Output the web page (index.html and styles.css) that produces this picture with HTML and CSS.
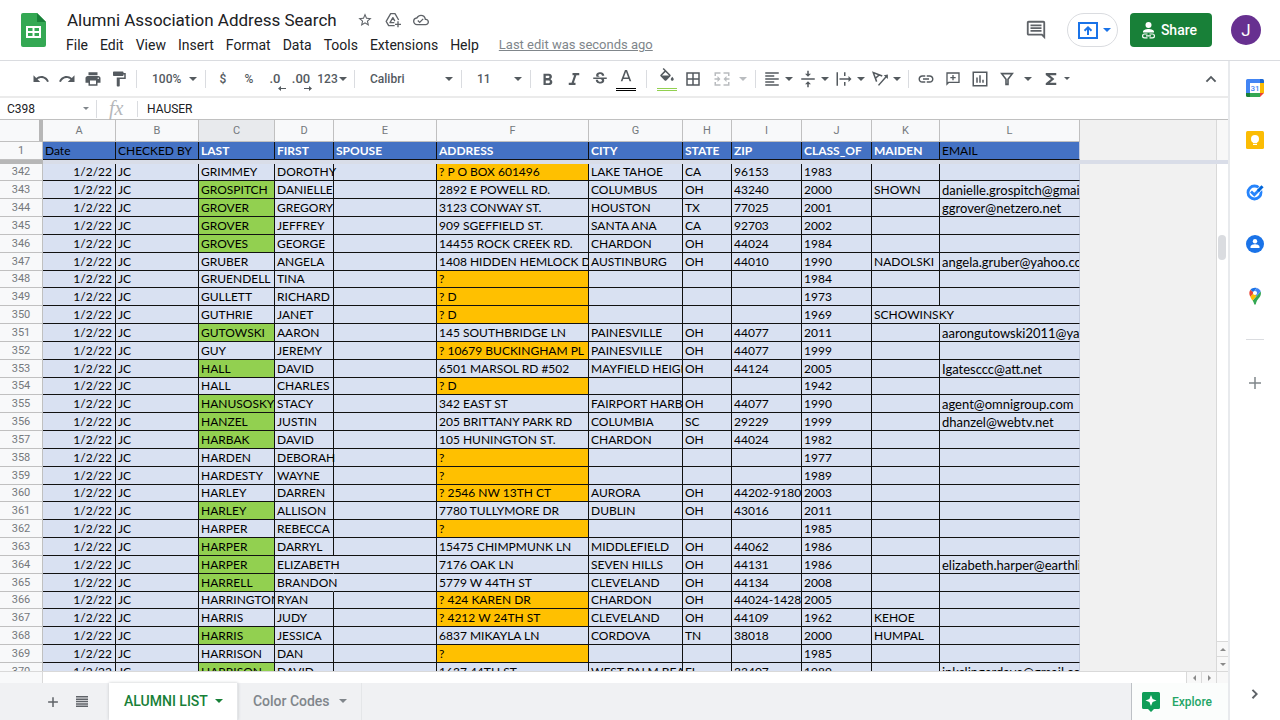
FILE: index.html
```html
<!DOCTYPE html>
<html lang="en">
<head>
<meta charset="utf-8">
<title>Alumni Association Address Search</title>
<link rel="stylesheet" href="styles.css">
</head>
<body>
<header class="top">
  <svg class="logo" viewBox="0 0 25 34" aria-hidden="true"><path fill="#34a853" d="M2 0h14l9 9v23a2 2 0 0 1-2 2H2a2 2 0 0 1-2-2V2a2 2 0 0 1 2-2z"/><path fill="#188038" d="M16 0l9 9h-9z"/><path fill="#fff" fill-rule="evenodd" d="M5 13h15v12H5zM7 15v3h4.500v-3zM13.500 15v3H18v-3zM7 20v3h4.500v-3zM13.500 20v3H18v-3z"/></svg>
  <div class="doc">
    <div class="doc-line">
      <h1>Alumni Association Address Search</h1>
      <button class="mini" aria-label="Star"><svg class="i16" viewBox="0 0 24 24"><path d="M22 9.240l-7.190-.62L12 2 9.190 8.630 2 9.240l5.460 4.730L5.820 21 12 17.270 18.180 21l-1.630-7.030zM12 15.400l-3.760 2.270 1-4.280-3.320-2.880 4.380-.38L12 6.100l1.710 4.040 4.380.38-3.320 2.880 1 4.280z"/></svg></button>
      <button class="mini" aria-label="Add shortcut to Drive"><svg class="i16" viewBox="0 0 24 24" fill="none" stroke="currentColor" stroke-width="2" stroke-linejoin="round"><path d="M14.500 20.500H5.500L1.800 14 8.500 2.500h6.500l5.500 9.500"/><path d="M14 16H7.500l4.300-7.500 3 5.200"/><path d="M19.500 14v9M15 18.500h9"/></svg></button>
      <button class="mini" aria-label="Document status: saved to Drive"><svg class="i16" viewBox="0 0 24 24"><path d="M19.350 10.040A7.490 7.490 0 0 0 12 4C9.110 4 6.600 5.640 5.350 8.040A5.994 5.994 0 0 0 0 14c0 3.310 2.690 6 6 6h13c2.760 0 5-2.240 5-5 0-2.640-2.050-4.780-4.650-4.960zM19 18H6c-2.210 0-4-1.790-4-4 0-2.050 1.530-3.760 3.560-3.970l1.070-.11.5-.95A5.469 5.469 0 0 1 12 6c2.620 0 4.880 1.860 5.390 4.430l.3 1.500 1.530.11A2.980 2.980 0 0 1 22 15c0 1.650-1.350 3-3 3zm-9-3.820l-2.090-2.090L6.500 13.500 10 17l6.010-6.010-1.410-1.410z"/></svg></button>
    </div>
    <nav class="menus">
      <button>File</button><button>Edit</button><button>View</button><button>Insert</button><button>Format</button><button>Data</button><button>Tools</button><button>Extensions</button><button>Help</button>
      <a href="#history">Last edit was seconds ago</a>
    </nav>
  </div>
  <div class="actions">
    <button class="mini comments" aria-label="Open comment history"><svg class="i22" viewBox="0 0 24 24"><path d="M21.990 4c0-1.100-.89-2-1.990-2H4c-1.100 0-2 .9-2 2v12c0 1.100.9 2 2 2h14l4 4zM20 4v13.170L18.830 16H4V4zM6 12h12v2H6zm0-3h12v2H6zm0-3h12v2H6z"/></svg></button>
    <button class="present" aria-label="Present"><svg width="20" height="17" viewBox="0 0 20 17" fill="none" stroke="currentColor" stroke-width="2"><path d="M1 1h18v15H1z"/><path d="M10 13V6M6.500 8.800L10 5.300l3.500 3.500"/></svg><span class="caret"></span></button>
    <button class="share"><svg width="13" height="17" viewBox="0 0 13 17" aria-hidden="true"><circle cx="6.500" cy="3" r="3" fill="#fff"/><path fill="#fff" d="M1 10.500V9.800C1 7.800 4.500 7 6.500 7s5.500.8 5.500 2.800v.7z"/><g fill="none" stroke="#fff" stroke-width="1.200"><path d="M5.500 12h-3a1.900 1.900 0 0 0 0 3.800h3M7.500 12h3a1.900 1.900 0 0 1 0 3.800h-3M4 13.900h5"/></g></svg>Share</button>
    <button class="avatar" aria-label="Account">J</button>
  </div>
</header>

<div class="frame">
<main class="work">
  <div class="toolbar" role="toolbar" aria-label="Formatting">
    <div class="group">
      <button class="tb" aria-label="Undo"><svg class="i18" viewBox="0 0 24 24"><path d="M12.500 8c-2.650 0-5.050.99-6.900 2.600L2 7v9h9l-3.620-3.620c1.390-1.160 3.160-1.880 5.120-1.880 3.540 0 6.550 2.310 7.600 5.500l2.370-.78C21.080 11.030 17.150 8 12.500 8z"/></svg></button>
      <button class="tb" aria-label="Redo"><svg class="i18" viewBox="0 0 24 24"><path d="M18.400 10.600C16.550 8.990 14.150 8 11.500 8c-4.650 0-8.580 3.030-9.960 7.220L3.900 16c1.050-3.190 4.050-5.500 7.600-5.500 1.950 0 3.730.72 5.120 1.880L13 16h9V7z"/></svg></button>
      <button class="tb" aria-label="Print"><svg class="i18" viewBox="0 0 24 24"><path d="M19 8H5c-1.660 0-3 1.340-3 3v6h4v4h12v-4h4v-6c0-1.660-1.340-3-3-3zm-3 11H8v-5h8zm3-7c-.55 0-1-.45-1-1s.45-1 1-1 1 .45 1 1-.45 1-1 1zM18 3H6v4h12z"/></svg></button>
      <button class="tb" aria-label="Paint format"><svg class="i18" viewBox="0 0 24 24"><path d="M18 4V3c0-.55-.45-1-1-1H5c-.55 0-1 .45-1 1v4c0 .55.45 1 1 1h12c.55 0 1-.45 1-1V6h1v4H9v11c0 .55.45 1 1 1h2c.55 0 1-.45 1-1v-9h8V4z"/></svg></button>
    </div>
    <span class="sep"></span>
    <label class="pick small"><select aria-label="Zoom"><option>100%</option></select><span class="caret"></span></label>
    <span class="sep"></span>
    <div class="group">
      <button class="tb" aria-label="Format as currency">$</button>
      <button class="tb" aria-label="Format as percent">%</button>
      <button class="tb dec" aria-label="Decrease decimal places">.0<svg width="8" height="5" viewBox="0 0 8 5"><path d="M3 0v2h5v1H3v2L0 2.500z"/></svg></button>
      <button class="tb dec" aria-label="Increase decimal places">.00<svg width="8" height="5" viewBox="0 0 8 5"><path d="M5 0v2H0v1h5v2l3-2.500z"/></svg></button>
      <button class="tb more" aria-label="More formats">123<span class="caret"></span></button>
    </div>
    <span class="sep"></span>
    <label class="pick large"><select aria-label="Font"><option>Calibri</option></select><span class="caret"></span></label>
    <span class="sep"></span>
    <label class="pick small"><select aria-label="Font size"><option>11</option></select><span class="caret"></span></label>
    <span class="sep"></span>
    <div class="group">
      <button class="tb" aria-label="Bold"><svg class="i18" viewBox="0 0 24 24"><path d="M15.600 11.790c.97-.67 1.650-1.770 1.650-2.790 0-2.260-1.750-4-4-4H6v15h8.040c2.090 0 3.710-1.700 3.710-3.790 0-1.520-.86-2.820-2.150-3.420zM9 7.500h3.500c.83 0 1.500.67 1.500 1.500s-.67 1.500-1.500 1.500H9zm4 10H9V14h4c.83 0 1.500.67 1.500 1.750S13.830 17.500 13 17.500z"/></svg></button>
      <button class="tb" aria-label="Italic"><svg class="i18" viewBox="0 0 24 24"><path d="M10 4v3h2.210l-3.420 10H5v3h9v-3h-2.210l3.420-10H19V4z"/></svg></button>
      <button class="tb" aria-label="Strikethrough"><svg class="i18" viewBox="0 0 24 24"><path d="M7.240 8.750c-.26-.48-.39-1.030-.39-1.670 0-.61.13-1.160.4-1.670.26-.5.63-.93 1.110-1.290a5.730 5.730 0 0 1 1.700-.83c.66-.19 1.390-.29 2.180-.29.81 0 1.540.11 2.210.34.66.22 1.230.54 1.690.94.47.4.83.88 1.080 1.430s.38 1.150.38 1.810h-3.010c0-.31-.05-.59-.15-.85-.09-.27-.24-.49-.44-.68-.2-.19-.45-.33-.75-.44-.3-.1-.66-.16-1.060-.16-.39 0-.74.04-1.030.13s-.53.21-.72.36c-.19.16-.34.34-.44.55-.1.21-.15.430-.15.66 0 .48.25.88.74 1.210.38.250.77.480 1.410.7H7.390c-.05-.08-.11-.17-.15-.25zM21 12v-2H3v2h9.620c.18.070.4.140.55.2.37.170.66.340.87.510s.35.360.43.570c.07.200.11.430.11.690 0 .23-.05.450-.14.660-.09.200-.23.380-.42.530-.19.150-.42.260-.71.350-.29.080-.63.130-1.010.130-.43 0-.83-.04-1.180-.13s-.66-.23-.91-.42a1.920 1.920 0 0 1-.59-.75c-.14-.31-.25-.76-.25-1.210H6.400c0 .55.080 1.130.24 1.580s.37.850.65 1.210c.28.350.6.660.98.920.37.260.78.480 1.220.650.440.170.9.300 1.380.390.480.080.96.130 1.440.130.8 0 1.530-.09 2.180-.28s1.210-.45 1.670-.79c.46-.34.82-.77 1.070-1.270s.38-1.070.38-1.710c0-.6-.1-1.140-.31-1.610-.05-.11-.11-.23-.17-.33H21z"/></svg></button>
      <button class="tb ink" aria-label="Text color"><svg class="i18" viewBox="0 0 24 24"><path d="M10.630 2.500L4.970 17.500h2.300l1.130-3h7.200l1.120 3h2.300L13.370 2.500zM9.180 12.500L12 5l2.820 7.500z"/></svg></button>
    </div>
    <span class="sep roomy"></span>
    <div class="group">
      <button class="tb ink green" aria-label="Fill color"><svg class="i18" viewBox="0 0 24 24"><path d="M16.560 8.940L7.620 0 6.210 1.410l2.380 2.380-5.150 5.150a1.490 1.490 0 0 0 0 2.120l5.500 5.500c.29.290.68.440 1.060.440s.77-.15 1.060-.44l5.500-5.500c.59-.58.59-1.530 0-2.120zM5.210 10L10 5.210 14.790 10zM19 11.500s-2 2.170-2 3.500c0 1.100.9 2 2 2s2-.9 2-2c0-1.330-2-3.500-2-3.500z"/></svg></button>
      <button class="tb" aria-label="Borders"><svg class="i18" viewBox="0 0 24 24"><path d="M3 3v18h18V3zm8 16H5v-6h6zm0-8H5V5h6zm8 8h-6v-6h6zm0-8h-6V5h6z"/></svg></button>
      <button class="tb split off" aria-label="Merge cells"><svg class="i18" viewBox="0 0 24 24"><path d="M2 3h8v2H4v3H2zm12 0h8v5h-2V5h-6zM2 16h2v3h6v2H2zm18 0h2v5h-8v-2h6zM2 11h4V8l4 4-4 4v-3H2zm20 0v2h-4v3l-4-4 4-4v3z"/></svg><span class="caret"></span></button>
    </div>
    <span class="sep"></span>
    <div class="group">
      <button class="tb duo" aria-label="Horizontal align"><svg class="i18" viewBox="0 0 24 24"><path d="M3 3h18v2H3zm0 4h12v2H3zm0 4h18v2H3zm0 4h12v2H3zm0 4h18v2H3z"/></svg><span class="caret"></span></button>
      <button class="tb duo" aria-label="Vertical align"><svg class="i18" viewBox="0 0 24 24"><path d="M8 19h3v4h2v-4h3l-4-4zm8-14h-3V1h-2v4H8l4 4zM3 11v2h18v-2z"/></svg><span class="caret"></span></button>
      <button class="tb duo" aria-label="Text wrapping"><svg class="i18" viewBox="0 0 24 24"><path d="M2 3h2v18H2zm10 0h2v5h-2zm0 13h2v5h-2zM6 11h12V8l4 4-4 4v-3H6z"/></svg><span class="caret"></span></button>
      <button class="tb duo" aria-label="Text rotation"><svg class="i18" viewBox="0 0 24 24"><path fill="none" stroke="currentColor" stroke-width="2" d="M7.500 15.500L3 3.500l12 4.500M6 11l5-4.500M10 20.500L21 8"/><path d="M22.500 6v6l-5.500-5z"/></svg><span class="caret"></span></button>
    </div>
    <span class="sep"></span>
    <div class="group spaced">
      <button class="tb" aria-label="Insert link"><svg class="i18" viewBox="0 0 24 24"><path d="M3.900 12c0-1.710 1.390-3.100 3.100-3.100h4V7H7c-2.760 0-5 2.240-5 5s2.240 5 5 5h4v-1.900H7c-1.710 0-3.100-1.390-3.100-3.100zM8 13h8v-2H8zm9-6h-4v1.900h4c1.710 0 3.100 1.390 3.100 3.100s-1.390 3.100-3.100 3.100h-4V17h4c2.760 0 5-2.240 5-5s-2.240-5-5-5z"/></svg></button>
      <button class="tb" aria-label="Insert comment"><svg class="i16" viewBox="0 0 24 24"><path fill-rule="evenodd" d="M2 2h20v16H6l-4 4zm2 2v13l1-1h15V4zM11 6h2v3h3v2h-3v3h-2v-3H8V9h3z"/></svg></button>
      <button class="tb" aria-label="Insert chart"><svg class="i18" viewBox="0 0 24 24"><path fill-rule="evenodd" d="M2 2h20v20H2zm2 2v16h16V4zM7 10h2v7H7zm4-3h2v10h-2zm4 6h2v4h-2z"/></svg></button>
      <button class="tb split filter" aria-label="Create a filter"><svg class="i16" viewBox="0 0 24 24" fill="none" stroke="currentColor" stroke-width="2.400"><path d="M4 4h16l-6.500 8.500V20h-3v-7.500z"/></svg><span class="caret"></span></button>
      <button class="tb duo" aria-label="Functions"><svg class="i18" viewBox="0 0 24 24"><path d="M19 4H5v2.500l7 5.500-7 5.500V20h14v-3h-8.500l6-5-6-5H19z"/></svg><span class="caret tiny"></span></button>
    </div>
    <button class="tb collapse" aria-label="Hide the menus"><svg class="i18" viewBox="0 0 24 24"><path d="M12 7.500l-7 7 1.800 1.800 5.200-5.200 5.200 5.200 1.800-1.800z"/></svg></button>
  </div>

  <div class="formula">
    <label class="name-box"><input aria-label="Name box" value="C398"><span class="caret tiny"></span></label>
    <span class="fx">fx</span>
    <input class="content" aria-label="Formula" value="HAUSER">
  </div>

  <section class="pane">
    <table class="sheet">
      <colgroup><col class="cn"><col class="ca"><col class="cb"><col class="cc"><col class="cd"><col class="ce"><col class="cf"><col class="cg"><col class="ch"><col class="ci"><col class="cj"><col class="ck"><col class="cl"></colgroup>
      <thead><tr><th class="corner"><th>A<th>B<th class="current">C<th>D<th>E<th>F<th>G<th>H<th>I<th>J<th>K<th>L</tr></thead>
      <tbody class="titles"><tr><th>1<td class="dark">Date<td class="dark">CHECKED BY<td>LAST<td>FIRST<td>SPOUSE<td>ADDRESS<td>CITY<td>STATE<td>ZIP<td>CLASS_OF<td>MAIDEN<td class="dark">EMAIL</tr></tbody>
    </table>
    <div class="gutter shaded"></div>
  </section>
  <div class="freeze"></div>
  <section class="pane grow">
    <div class="clip">
    <table class="sheet">
      <colgroup><col class="cn"><col class="ca"><col class="cb"><col class="cc"><col class="cd"><col class="ce"><col class="cf"><col class="cg"><col class="ch"><col class="ci"><col class="cj"><col class="ck"><col class="cl"></colgroup>
      <tbody class="rows">
      <tr><th>342<td>1/2/22<td>JC<td>GRIMMEY<td>DOROTHY<td><td class="q">? P O BOX 601496<td>LAKE TAHOE<td>CA<td>96153<td>1983<td><td></tr>
      <tr><th>343<td>1/2/22<td>JC<td class="g">GROSPITCH<td>DANIELLE<td><td>2892 E POWELL RD.<td>COLUMBUS<td>OH<td>43240<td>2000<td>SHOWN<td>danielle.grospitch@gmail.com</tr>
      <tr><th>344<td>1/2/22<td>JC<td class="g">GROVER<td>GREGORY<td><td>3123 CONWAY ST.<td>HOUSTON<td>TX<td>77025<td>2001<td><td>ggrover@netzero.net</tr>
      <tr><th>345<td>1/2/22<td>JC<td class="g">GROVER<td>JEFFREY<td><td>909 SGEFFIELD ST.<td>SANTA ANA<td>CA<td>92703<td>2002<td><td></tr>
      <tr><th>346<td>1/2/22<td>JC<td class="g">GROVES<td>GEORGE<td><td>14455 ROCK CREEK RD.<td>CHARDON<td>OH<td>44024<td>1984<td><td></tr>
      <tr><th>347<td>1/2/22<td>JC<td>GRUBER<td>ANGELA<td><td>1408 HIDDEN HEMLOCK DR<td>AUSTINBURG<td>OH<td>44010<td>1990<td>NADOLSKI<td>angela.gruber@yahoo.com</tr>
      <tr><th>348<td>1/2/22<td>JC<td>GRUENDELL<td>TINA<td><td class="q">?<td><td><td><td>1984<td><td></tr>
      <tr><th>349<td>1/2/22<td>JC<td>GULLETT<td>RICHARD<td><td class="q">? D<td><td><td><td>1973<td><td></tr>
      <tr><th>350<td>1/2/22<td>JC<td>GUTHRIE<td>JANET<td><td class="q">? D<td><td><td><td>1969<td class="spill">SCHOWINSKY<td></tr>
      <tr><th>351<td>1/2/22<td>JC<td class="g">GUTOWSKI<td>AARON<td><td>145 SOUTHBRIDGE LN<td>PAINESVILLE<td>OH<td>44077<td>2011<td><td>aarongutowski2011@yahoo.com</tr>
      <tr><th>352<td>1/2/22<td>JC<td>GUY<td>JEREMY<td><td class="q">? 10679 BUCKINGHAM PL<td>PAINESVILLE<td>OH<td>44077<td>1999<td><td></tr>
      <tr><th>353<td>1/2/22<td>JC<td class="g">HALL<td>DAVID<td><td>6501 MARSOL RD #502<td>MAYFIELD HEIGHTS<td>OH<td>44124<td>2005<td><td>Igatesccc@att.net</tr>
      <tr><th>354<td>1/2/22<td>JC<td>HALL<td>CHARLES<td><td class="q">? D<td><td><td><td>1942<td><td></tr>
      <tr><th>355<td>1/2/22<td>JC<td class="g">HANUSOSKY<td>STACY<td><td>342 EAST ST<td>FAIRPORT HARBOR<td>OH<td>44077<td>1990<td><td>agent@omnigroup.com</tr>
      <tr><th>356<td>1/2/22<td>JC<td class="g">HANZEL<td>JUSTIN<td><td>205 BRITTANY PARK RD<td>COLUMBIA<td>SC<td>29229<td>1999<td><td>dhanzel@webtv.net</tr>
      <tr><th>357<td>1/2/22<td>JC<td class="g">HARBAK<td>DAVID<td><td>105 HUNINGTON ST.<td>CHARDON<td>OH<td>44024<td>1982<td><td></tr>
      <tr><th>358<td>1/2/22<td>JC<td>HARDEN<td>DEBORAH<td><td class="q">?<td><td><td><td>1977<td><td></tr>
      <tr><th>359<td>1/2/22<td>JC<td>HARDESTY<td>WAYNE<td><td class="q">?<td><td><td><td>1989<td><td></tr>
      <tr><th>360<td>1/2/22<td>JC<td>HARLEY<td>DARREN<td><td class="q">? 2546 NW 13TH CT<td>AURORA<td>OH<td>44202-9180<td>2003<td><td></tr>
      <tr><th>361<td>1/2/22<td>JC<td class="g">HARLEY<td>ALLISON<td><td>7780 TULLYMORE DR<td>DUBLIN<td>OH<td>43016<td>2011<td><td></tr>
      <tr><th>362<td>1/2/22<td>JC<td>HARPER<td>REBECCA<td><td class="q">?<td><td><td><td>1985<td><td></tr>
      <tr><th>363<td>1/2/22<td>JC<td class="g">HARPER<td>DARRYL<td><td>15475 CHIMPMUNK LN<td>MIDDLEFIELD<td>OH<td>44062<td>1986<td><td></tr>
      <tr><th>364<td>1/2/22<td>JC<td class="g">HARPER<td class="spill">ELIZABETH<td><td>7176 OAK LN<td>SEVEN HILLS<td>OH<td>44131<td>1986<td><td>elizabeth.harper@earthlink.net</tr>
      <tr><th>365<td>1/2/22<td>JC<td class="g">HARRELL<td class="spill">BRANDON<td><td>5779 W 44TH ST<td>CLEVELAND<td>OH<td>44134<td>2008<td><td></tr>
      <tr><th>366<td>1/2/22<td>JC<td>HARRINGTON<td>RYAN<td><td class="q">? 424 KAREN DR<td>CHARDON<td>OH<td>44024-1428<td>2005<td><td></tr>
      <tr><th>367<td>1/2/22<td>JC<td>HARRIS<td>JUDY<td><td class="q">? 4212 W 24TH ST<td>CLEVELAND<td>OH<td>44109<td>1962<td>KEHOE<td></tr>
      <tr><th>368<td>1/2/22<td>JC<td class="g">HARRIS<td>JESSICA<td><td>6837 MIKAYLA LN<td>CORDOVA<td>TN<td>38018<td>2000<td>HUMPAL<td></tr>
      <tr><th>369<td>1/2/22<td>JC<td>HARRISON<td>DAN<td><td class="q">?<td><td><td><td>1985<td><td></tr>
      <tr><th>370<td>1/2/22<td>JC<td class="g">HARRISON<td>DAVID<td><td>1637 44TH ST<td>WEST PALM BEACH<td>FL<td>33407<td>1989<td><td>inkslingerdave@gmail.com</tr>
      </tbody>
    </table>
    </div>
    <div class="gutter">
      <div class="thumb"></div>
      <button class="step first" aria-label="Scroll up"><svg width="6" height="3" viewBox="0 0 6 3"><path d="M3 0l3 3H0z"/></svg></button>
      <button class="step" aria-label="Scroll down"><svg width="6" height="3" viewBox="0 0 6 3"><path d="M0 0h6L3 3z"/></svg></button>
    </div>
  </section>
  <div class="hscroll">
    <div class="hs-edge"></div>
    <div class="hs-track"></div>
    <button class="step side-step" aria-label="Scroll left"><svg width="3" height="6" viewBox="0 0 3 6"><path d="M3 0v6L0 3z"/></svg></button>
    <button class="step side-step" aria-label="Scroll right"><svg width="3" height="6" viewBox="0 0 3 6"><path d="M0 0v6l3-3z"/></svg></button>
    <div class="hs-corner"></div>
  </div>
  <footer class="tabs">
    <button class="tool" aria-label="Add sheet"><svg class="i18" viewBox="0 0 24 24"><path d="M18.500 13h-5.500v5.500h-2V13H5.500v-2H11V5.500h2V11h5.500z"/></svg></button>
    <button class="tool" aria-label="All sheets"><svg width="12" height="11" viewBox="0 0 12 11"><path d="M0 0h12v1.500H0zm0 2.400h12v1.500H0zm0 2.400h12v1.500H0zm0 2.400h12v1.500H0zm0 2.300h12V11H0z"/></svg></button>
    <button class="tab active">ALUMNI LIST<span class="caret"></span></button>
    <button class="tab">Color Codes<span class="caret"></span></button>
    <button class="explore"><svg width="18" height="20" viewBox="0 0 18 20" aria-hidden="true"><path fill="#0f9d58" d="M1.500 0h15A1.500 1.500 0 0 1 18 1.500v14a1.500 1.500 0 0 1-1.500 1.500H12l-3 3-3-3H1.500A1.500 1.500 0 0 1 0 15.500v-14A1.500 1.500 0 0 1 1.500 0z"/><path fill="#fff" d="M9 3l1.600 3.900 3.900 1.600-3.900 1.600L9 14l-1.600-3.900-3.900-1.600 3.900-1.600z"/></svg>Explore</button>
  </footer>
</main>

<aside class="side">
  <button aria-label="Calendar"><svg class="i18" viewBox="0 0 18 18"><path fill="#4285f4" d="M1.500 0H14v4H4v10H0V1.500A1.500 1.500 0 0 1 1.500 0z"/><path fill="#1967d2" d="M14 0h2.500A1.500 1.500 0 0 1 18 1.500V4h-4z"/><path fill="#fbbc04" d="M14 4h4v10h-4z"/><path fill="#34a853" d="M4 14h10v4H4z"/><path fill="#188038" d="M0 14h4v4H1.500A1.500 1.500 0 0 1 0 16.500z"/><path fill="#ea4335" d="M14 14h4l-4 4z"/><path fill="#fff" d="M4 4h10v10H4z"/><text x="9" y="12" text-anchor="middle" class="day">31</text></svg></button>
  <button aria-label="Keep"><svg class="i18" viewBox="0 0 18 18"><rect width="18" height="18" rx="1.500" fill="#fbbc04"/><circle cx="9" cy="8" r="4" fill="#fff"/><path fill="#fff" d="M7 10h4v2H7zm0 2.700h4V14H7z"/></svg></button>
  <button aria-label="Tasks"><svg class="i18" viewBox="0 0 18 18" fill="none"><circle cx="8.500" cy="9.500" r="6.500" stroke="#2684fc" stroke-width="2.800"/><path stroke="#fff" stroke-width="4.500" d="M8 12l9-9"/><path stroke="#2684fc" stroke-width="2.800" d="M5 8.500l3.300 3.200L13 7"/><path stroke="#0066da" stroke-width="3" d="M12 8l4.500-4.800"/></svg></button>
  <button aria-label="Contacts"><svg class="i18" viewBox="0 0 18 18"><circle cx="9" cy="9" r="9" fill="#1a73e8"/><circle cx="9" cy="6.200" r="2.200" fill="#fff"/><path fill="#fff" d="M4.500 13v-1.200C4.500 10 7.500 9.300 9 9.300s4.500.7 4.500 2.500V13z"/></svg></button>
  <button aria-label="Maps"><svg class="i18" viewBox="0 0 18 18"><path fill="#34a853" d="M14.700 4.600c.9 3.500-.7 5.400-2.700 7.700-1.300 1.500-1.600 2.900-2.100 4.500-.2.600-.4.900-.9.900s-.7-.4-.9-.9c-.4-1.300-.8-2.300-1.500-3.300z"/><path fill="#fbbc04" d="M4.300 9.700L9 4.200l2.300 3.700-4.700 5.600C5.600 12.200 4.900 11.300 4.300 9.700z"/><path fill="#ea4335" d="M4.500 2.700L8 5.500 4.300 9.700C2.900 7 3 4.600 4.500 2.700z"/><path fill="#4285f4" d="M10.800 1c1.800.5 3.200 1.800 3.900 3.600L10.500 9l-3-3z"/><path fill="#1a73e8" d="M4.500 2.700C6 .9 8.500.3 10.800 1L7.400 5.200z"/><circle cx="9" cy="6" r="2.100" fill="#fff"/></svg></button>
  <hr>
  <button class="grey" aria-label="Get add-ons"><svg class="i18" viewBox="0 0 24 24"><path d="M20 13h-7v7h-2v-7H4v-2h7V4h2v7h7z"/></svg></button>
  <button class="grey last" aria-label="Hide side panel"><svg class="i18" viewBox="0 0 24 24"><path d="M9.500 5.500l-1.800 1.800 4.700 4.700-4.700 4.700 1.800 1.800L16 12z"/></svg></button>
</aside>
</div>
</body>
</html>
```

FILE: styles.css
```css
* { box-sizing: border-box; }
body {
  margin: 0;
  height: 100vh;
  display: flex;
  flex-direction: column;
  overflow: hidden;
  background: #fff;
  font-family: Roboto, "Liberation Sans", sans-serif;
  color: #202124;
}
button, input, select { font: inherit; color: inherit; }
button { border: 0; padding: 0; background: none; }
svg { fill: currentColor; flex: none; }
svg[fill="none"] { fill: none; }
.i16 { width: 16px; height: 16px; }
.i18 { width: 18px; height: 18px; }
.i22 { width: 22px; height: 22px; }
.caret {
  flex: none;
  border: 4px solid transparent;
  border-top-color: currentColor;
  border-bottom: 0;
}
.caret.tiny { border-width: 3px 3px 0; }

/* Header */
.top {
  flex: none;
  height: 61px;
  display: flex;
  padding: 0 19px 0 21px;
  border-bottom: 1px solid #dadce0;
}
.logo { width: 25px; height: 34px; margin-top: 13px; }
.doc { margin-left: 20px; padding-top: 8px; }
.doc-line { display: flex; align-items: center; height: 24px; gap: 12px; }
h1 { margin: 0 8px 0 1px; font-size: 17px; line-height: 24px; font-weight: 400; white-space: nowrap; }
.mini { display: flex; color: #5f6368; }
.menus { display: flex; gap: 12px; margin-top: 3px; font-size: 14px; line-height: 20px; white-space: nowrap; }
.menus a { color: #80868b; margin-left: 8px; font-size: 13px; }
.actions { margin-left: auto; display: flex; align-items: center; }
.comments { margin-right: 20px; }
.present {
  display: flex; align-items: center; gap: 5px;
  height: 34px; padding: 0 6px 0 10px; margin-right: 12px;
  border: 1px solid #dadce0; border-radius: 17px; color: #1a73e8;
}
.share {
  display: flex; align-items: center; gap: 6px;
  height: 34px; padding: 0 15px 0 12px; margin-right: 19px;
  border-radius: 4px; background: #188038; color: #fff;
  font-size: 14px; font-weight: 500;
}
.avatar { width: 30px; height: 30px; border-radius: 50%; background: #673090; color: #fff; font-size: 17px; }

.frame { flex: 1; display: flex; min-height: 0; }
.work { flex: 1; min-width: 0; display: flex; flex-direction: column; }

/* Toolbar */
.toolbar {
  flex: none;
  height: 37px;
  display: flex; align-items: center;
  padding: 0 4px 0 28px;
  border-bottom: 2px solid #ebebeb;
  color: #545a5f;
  font-size: 12px;
}
.group { display: flex; align-items: center; }
.group.spaced { gap: 1px; }
.sep { width: 1px; height: 18px; margin: 0 4px; background: #dadce0; }
.sep.roomy { margin: 0 7px; }
.tb { width: 26px; height: 24px; display: flex; align-items: center; justify-content: center; font-weight: 500; }
.tb.dec { position: relative; font-size: 13px; }
.tb.dec svg { position: absolute; right: 2px; bottom: 0; }
.tb.more { width: 36px; gap: 1px; }
.tb.ink { width: 20px; margin: 0 3px; border-bottom: 3px double #000; }
.tb.green { border-color: #92d050; }
.tb.split { width: 45px; padding-left: 3px; gap: 8px; }
.tb.filter { width: 43px; padding-left: 0; gap: 9px; }
.tb.duo { width: 36px; gap: 4px; }
.off { color: #b9bcbf; }
.collapse { margin-left: auto; }
.pick { display: flex; align-items: center; padding: 0 4px 0 11px; }
.pick.small { width: 60px; }
.pick.large { width: 98px; }
.pick select { flex: 1; min-width: 0; appearance: none; border: 0; padding: 0; background: none; font-weight: 500; }

/* Formula bar */
.formula { flex: none; height: 22px; display: flex; align-items: center; border-bottom: 1px solid #c0c0c0; font-size: 13px; }
.formula input { border: 0; padding: 0; outline: 0; background: none; min-width: 0; }
.name-box { width: 97px; height: 18px; display: flex; align-items: center; padding: 0 7px; border-right: 1px solid #dadce0; color: #80868b; font-size: 12px; }
.name-box input { flex: 1; color: #202124; }
.fx { width: 41px; height: 16px; padding-left: 12px; border-right: 1px solid #dadce0; color: #b5b7ba; font: italic 20px/14px "Liberation Serif", serif; }
.content { flex: 1; margin-left: 9px; font-size: 12px; }

/* Grid */
.pane { flex: none; display: flex; background: #f1f1f1; }
.pane.grow { flex: 1; min-height: 0; }
.clip { flex: 1; min-width: 0; overflow: hidden; }
.sheet {
  flex: none;
  width: 1080px;
  table-layout: fixed;
  border-collapse: separate;
  border-spacing: 0;
  font-family: Lato, "Liberation Sans", sans-serif;
  font-size: 12px;
  line-height: 16px;
}
.cn { width: 43px; }
.ca { width: 73px; }
.cb { width: 83px; }
.cc { width: 76px; }
.cd { width: 59px; }
.ce { width: 103px; }
.cf { width: 152px; }
.cg { width: 94px; }
.ch { width: 49px; }
.ci, .cj { width: 70px; }
.ck { width: 68px; }
.cl { width: 140px; }
.sheet th {
  padding: 0;
  border: solid #c0c0c0;
  border-width: 0 1px 1px 0;
  background: #f8f9fa;
  font-family: Roboto, "Liberation Sans", sans-serif;
  font-size: 11px;
  font-weight: 400;
  color: #74787c;
}
.sheet thead th { height: 22px; }
.sheet th.corner { border-right: 4px solid #b7b7b7; }
.sheet th.current { background: #e8eaed; }
.sheet td {
  height: 18px;
  padding: 0 0 0 2px;
  border: solid #111;
  border-width: 0 1px 1px 0;
  background: #d9e1f2;
  color: #000;
  white-space: nowrap;
  overflow: hidden;
}
.sheet td:last-child { border-right-color: #c5cde0; }
.rows tr:nth-child(6n+1) td { height: 17px; }
.rows tr { line-height: 14px; }
.rows td:nth-child(2) { text-align: right; padding-right: 3px; }
/* First names may run into the empty SPOUSE column */
.rows td:nth-child(5) { overflow: visible; }
.rows td:last-child { font-size: 13px; }
.sheet .g { background: #92d050; }
.sheet .q { background: #ffc000; }
.sheet .spill { overflow: visible; border-right-color: #d9e1f2; }
.titles td { background: #4472c4; color: #fff; font-weight: 700; }
.titles td.dark { color: #000; font-weight: 400; }
.freeze { flex: none; height: 4px; background: linear-gradient(to right, #b7b7b7 43px, #d9dde8 43px); }

/* Scrollbars */
.gutter { flex: none; width: 12px; display: flex; flex-direction: column; border-left: 1px solid #d9d9d9; background: #fff; }
.gutter.shaded { margin-left: auto; background: #f8f8f8; }
.thumb { width: 8px; height: 25px; margin: 71px 0 0 1px; border-radius: 4px; background: #dadce0; }
.step { flex: none; height: 15px; display: flex; align-items: center; justify-content: center; border-top: 1px solid #d9d9d9; background: #f8f8f8; color: #8a8a8a; }
.step.first { margin-top: auto; }
.hscroll { flex: none; height: 12px; display: flex; border-top: 1px solid #d9d9d9; }
.hs-edge { width: 43px; border-right: 1px solid #d9d9d9; background: #f8f9fa; }
.hs-track { flex: 1; }
.side-step { width: 15px; height: 11px; border-top: 0; border-left: 1px solid #d9d9d9; }
.hs-corner { width: 12px; border-left: 1px solid #d9d9d9; background: #f8f8f8; }

/* Sheet tabs */
.tabs { flex: none; height: 37px; display: flex; padding-left: 38px; background: #f0f1f3; color: #5f6368; font-size: 14px; font-weight: 500; }
.tool { width: 29px; display: flex; align-items: center; justify-content: center; }
.tab { display: flex; align-items: center; gap: 9px; padding: 0 14px 2px 15px; border-right: 1px solid #e4e6e8; color: #80868b; }
.tab.active { margin-left: 13px; gap: 7px; background: #fff; color: #188038; box-shadow: 0 0 3px #c4c7ca; }
.explore { width: 97px; margin-left: auto; display: flex; align-items: center; gap: 12px; padding-left: 10px; border-left: 1px solid #bdc1c6; background: #fbfdfc; color: #23a566; font-size: 12px; }

/* Side panel */
.side { flex: none; width: 52px; display: flex; flex-direction: column; align-items: center; padding: 18px 0 17px; gap: 34px; border-left: 2px solid #e8eaed; }
.side button { display: flex; }
.side hr { width: 18px; height: 1px; margin: 0; border: 0; background: #dadce0; }
.side .grey { color: #80868b; }
.side .last { margin-top: auto; color: #5f6368; }
.day { fill: #4285f4; font: 500 8px Roboto, sans-serif; }
```
